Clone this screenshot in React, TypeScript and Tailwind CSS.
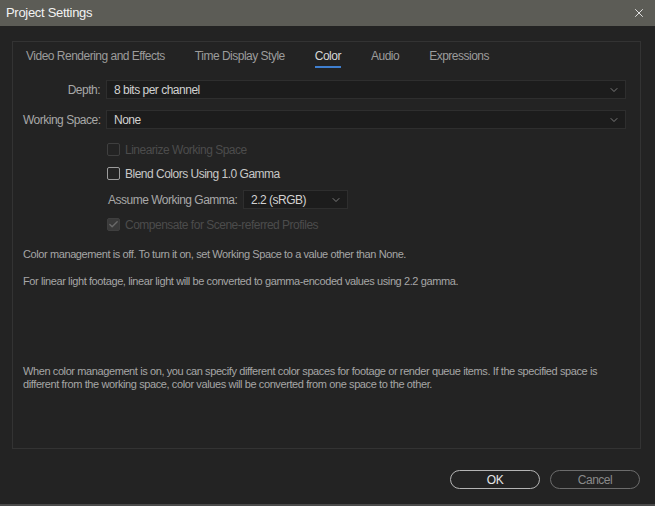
import { Check, ChevronDown, X } from 'lucide-react';

const font = { fontFamily: '"Liberation Sans", Arial, sans-serif' };

const tabs = ['Video Rendering and Effects', 'Time Display Style', 'Color', 'Audio', 'Expressions'];

function Select({ value, className }: { value: string; className: string }) {
  return (
    <div
      className={`flex h-[19px] items-center justify-between border border-[#2e2e2e] bg-[#1c1c1c] pl-[7px] pr-[5px] text-[12px] text-[#d2d2d2] ${className}`}
    >
      <span className="whitespace-nowrap">{value}</span>
      <ChevronDown className="h-[12px] w-[12px] text-[#9a9a9a]" strokeWidth={1.5} />
    </div>
  );
}

function Checkbox({ label, checked, disabled }: { label: string; checked?: boolean; disabled?: boolean }) {
  return (
    <div className="flex h-[13px] items-center gap-[5px]">
      <span
        className={`flex h-[13px] w-[13px] items-center justify-center rounded-[2px] border ${
          disabled ? 'border-[#3f3f3f]' : 'border-[#9c9c9c]'
        } ${checked ? 'bg-[#3a3a3a]' : ''}`}
      >
        {checked && <Check className="h-[11px] w-[11px] text-[#6a6a6a]" strokeWidth={3} />}
      </span>
      <span className={`whitespace-nowrap text-[12px] ${disabled ? 'text-[#4c4c4c]' : 'text-[#c8c8c8]'}`}>{label}</span>
    </div>
  );
}

export default function App() {
  return (
    <div className="flex h-[506px] w-[655px] flex-col overflow-hidden bg-[#232323] tracking-[-0.5px]" style={font}>
      <div className="flex h-[26px] shrink-0 items-center justify-between bg-[#5c5c56] pl-[6px] pr-[9px]">
        <span className="text-[13px] tracking-[-0.3px] text-[#f2f2f2]">Project Settings</span>
        <X className="h-[14px] w-[14px] text-[#f2f2f2]" strokeWidth={1.5} />
      </div>

      <div className="px-[12px] pt-[15px]">
        <div className="flex h-[408px] w-[629px] flex-col border border-[#333333] pl-[10px] pr-[14px]">
          <div className="mt-[6px] flex gap-[30px] pl-[3px]">
            {tabs.map((t) => (
              <div key={t} className="flex flex-col items-center">
                <span
                  className={`whitespace-nowrap text-[12px] leading-[16px] ${
                    t === 'Color' ? 'text-[#d8d8d8]' : 'text-[#9c9c9c]'
                  }`}
                >
                  {t}
                </span>
                <span className={`mt-[2px] h-[2px] w-full ${t === 'Color' ? 'bg-[#3f7fcf]' : ''}`} />
              </div>
            ))}
          </div>

          <div className="mt-[12px] flex items-center gap-[6px]">
            <span className="w-[77px] whitespace-nowrap text-right text-[12px] text-[#a8a8a8]">Depth:</span>
            <Select value="8 bits per channel" className="flex-1" />
          </div>
          <div className="mt-[11px] flex items-center gap-[6px]">
            <span className="w-[77px] whitespace-nowrap text-right text-[12px] text-[#a8a8a8]">Working Space:</span>
            <Select value="None" className="flex-1" />
          </div>

          <div className="ml-[84px] mt-[14px] flex flex-col">
            <Checkbox label="Linearize Working Space" disabled />
            <div className="mt-[11px]">
              <Checkbox label="Blend Colors Using 1.0 Gamma" />
            </div>
            <div className="mt-[10px] flex items-center gap-[6px] pl-[1px]">
              <span className="w-[129px] whitespace-nowrap text-[12px] text-[#a8a8a8]">Assume Working Gamma:</span>
              <Select value="2.2 (sRGB)" className="w-[105px]" />
            </div>
            <div className="mt-[9px]">
              <Checkbox label="Compensate for Scene-referred Profiles" checked disabled />
            </div>
          </div>

          <div className="text-[11px] leading-[13px] tracking-[-0.4px] text-[#a6a6a6]">
            <p className="mt-[17px]">
              Color management is off. To turn it on, set Working Space to a value other than None.
            </p>
            <p className="mt-[14px]">
              For linear light footage, linear light will be converted to gamma-encoded values using 2.2 gamma.
            </p>
            <p className="mt-[77px] pr-[20px]">
              When color management is on, you can specify different color spaces for footage or render queue items. If
              the specified space is different from the working space, color values will be converted from one space to
              the other.
            </p>
          </div>
        </div>

        <div className="mt-[21px] flex justify-end gap-[10px] pr-[3px]">
          <button className="h-[19px] w-[90px] rounded-full border-[1.5px] border-[#b4b4b4] text-[12px] text-[#e6e6e6]">
            OK
          </button>
          <button className="h-[19px] w-[90px] rounded-full border-[1.5px] border-[#6c6c6c] text-[12px] text-[#8a8a8a]">
            Cancel
          </button>
        </div>
      </div>
      <div className="mt-auto h-[2px] bg-[#4a4a4a]" />
    </div>
  );
}
